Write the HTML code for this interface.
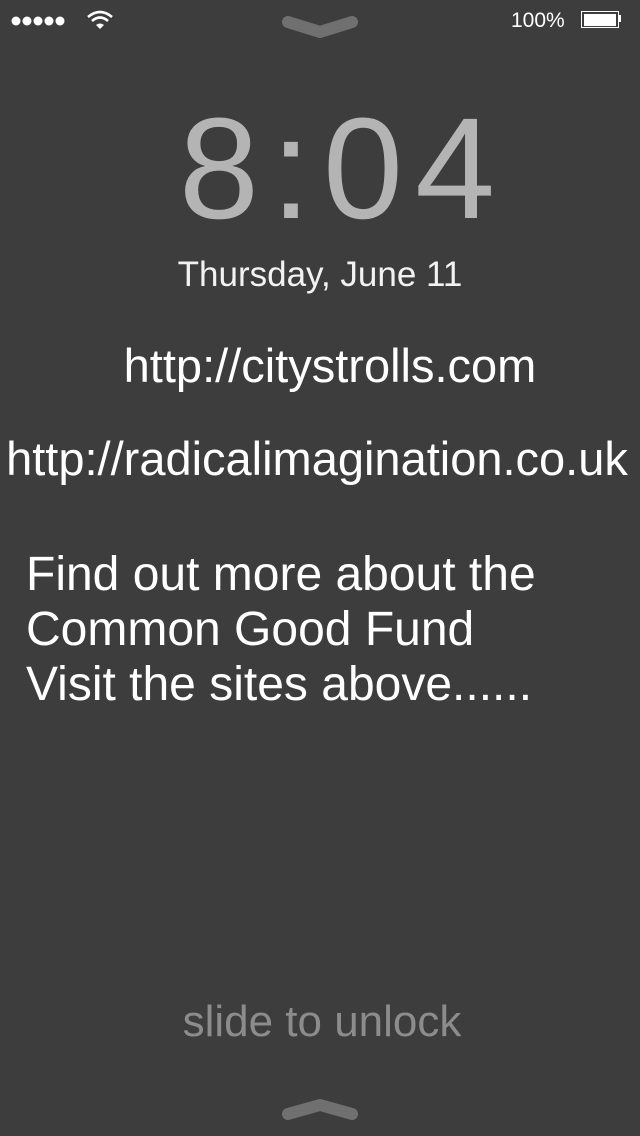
<!DOCTYPE html>
<html><head><meta charset="utf-8"><style>
html,body{margin:0;padding:0;}
body{width:640px;height:1136px;background:#3d3d3d;position:relative;overflow:hidden;font-family:"Liberation Sans",sans-serif;color:#fff;}
.a{position:absolute;white-space:nowrap;line-height:1;}
.c{left:0;width:640px;text-align:center;}
</style></head><body>
<svg class="a" style="left:10px;top:14px" width="60" height="14" viewBox="0 0 60 14"><circle cx="6" cy="7" r="4.5" fill="#fff"/><circle cx="17" cy="7" r="4.5" fill="#fff"/><circle cx="28" cy="7" r="4.5" fill="#fff"/><circle cx="39" cy="7" r="4.5" fill="#fff"/><circle cx="50" cy="7" r="4.5" fill="#fff"/></svg>
<svg class="a" style="left:86px;top:9px" width="28" height="22" viewBox="0 0 28 22"><path d="M2 8 Q14 -2 26 8" stroke="#fff" stroke-width="2.6" fill="none"/><path d="M6 12 Q14 5 22 12" stroke="#fff" stroke-width="2.6" fill="none"/><path d="M10 16 Q14 13 18 16 L14 20Z" fill="#fff"/></svg>
<svg class="a" style="left:280px;top:12px" width="80" height="28" viewBox="0 0 80 28"><path d="M8 10 L40 20 L72 10" stroke="#707070" stroke-width="12" stroke-linecap="round" stroke-linejoin="round" fill="none"/></svg>
<div class="a" style="left:511px;top:10px;font-size:21px;color:#fff">100%</div>
<div class="a" style="left:581px;top:11px;width:36px;height:15px;border:1.5px solid #fff;"></div>
<div class="a" style="left:584px;top:14px;width:32px;height:12px;background:#fff;"></div>
<div class="a" style="left:619px;top:15px;width:2px;height:7px;background:#fff;"></div>
<div class="a c" style="top:97px;font-size:144px;color:#b4b4b4;letter-spacing:12px;left:23px">8:04</div>
<div class="a c" style="top:257px;font-size:35px;color:#f2f2f2">Thursday, June 11</div>
<div class="a c" style="top:342px;font-size:47px;left:10px">http://citystrolls.com</div>
<div class="a c" style="top:435px;font-size:47px;left:-3px">http://radicalimagination.co.uk</div>
<div class="a" style="left:26px;top:547px;font-size:48px;line-height:55px">Find out more about the<br>Common Good Fund<br>Visit the sites above......</div>
<div class="a c" style="top:1000px;font-size:44px;color:#8c8c8c;left:2px">slide to unlock</div>
<svg class="a" style="left:280px;top:1094px" width="80" height="30" viewBox="0 0 80 30"><path d="M8 20 L40 11 L72 20" stroke="#707070" stroke-width="12" stroke-linecap="round" stroke-linejoin="round" fill="none"/></svg>
</body></html>
